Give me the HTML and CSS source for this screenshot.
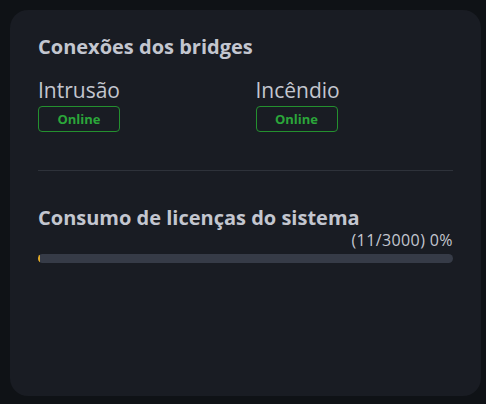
FILE: index.html
```html
<!DOCTYPE html>
<html lang="pt-BR">
<head>
  <meta charset="UTF-8" />
  <title>Painel</title>
  <link rel="stylesheet" href="styles.css">
</head>
<body>
  <div class="card">
    <h2 class="title">Conexões dos bridges</h2>
    <div class="bridges">
      <div class="bridge">
        <div class="bridge-name">Intrusão</div>
        <span class="badge">Online</span>
      </div>
      <div class="bridge">
        <div class="bridge-name">Incêndio</div>
        <span class="badge">Online</span>
      </div>
    </div>

    <hr class="divider">

    <h2 class="title">Consumo de licenças do sistema</h2>
    <div class="usage">(11/3000) 0%</div>
    <div class="bar">
      <div class="bar-fill" style="width: 0.37%"></div>
    </div>
  </div>
</body>
</html>
```

FILE: styles.css
```css
body {
  margin: 0;
  padding: 10px 5px 8px 10px;
  background: #0f1216;
  font-family: "Open Sans", "Noto Sans", sans-serif;
  color: #c6c9d1;
}
.card {
  background: #191c23;
  border-radius: 18px;
  height: 386px;
  box-sizing: border-box;
  padding: 25px 28px;
}
.title {
  margin: 0;
  font-size: 20px;
  font-weight: 700;
  color: #c3c6cf;
  line-height: 24px;
}
.bridges {
  display: grid;
  grid-template-columns: 1fr 1fr;
  column-gap: 20px;
  margin-top: 18px;
}
.bridge-name {
  font-size: 21px;
  line-height: 26px;
  color: #c3c6cf;
}
.badge {
  display: block;
  margin-top: 3px;
  width: 82px;
  height: 26px;
  box-sizing: border-box;
  border: 1px solid #24902f;
  border-radius: 4px;
  text-align: center;
  line-height: 24px;
  font-size: 13px;
  font-weight: 700;
  color: #2ba63a;
}
.divider {
  border: 0;
  border-top: 1px solid #2e323a;
  margin: 38px 0 35px;
}
.usage {
  text-align: right;
  font-size: 16px;
  line-height: 20px;
  letter-spacing: 0.4px;
  color: #c3c6cf;
}
.bar {
  margin-top: 4px;
  height: 9px;
  border-radius: 5px;
  background: #363b47;
  overflow: hidden;
}
.bar-fill {
  height: 100%;
  min-width: 2px;
  background: #e0a824;
}
```
